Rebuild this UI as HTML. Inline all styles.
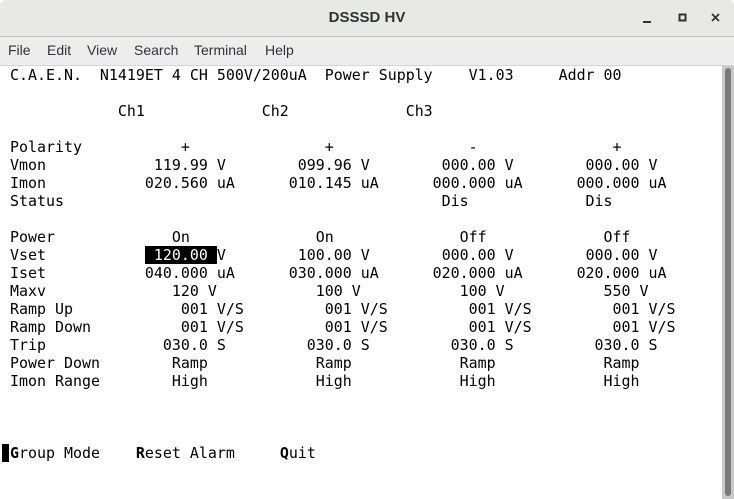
<!DOCTYPE html>
<html><head><meta charset="utf-8"><style>
html,body{margin:0;padding:0;width:734px;height:499px;overflow:hidden;background:#fff;font-family:"Liberation Sans",sans-serif}
#title{position:absolute;left:0;top:0;width:734px;height:36px;background:#e8e8e7;border-bottom:1px solid #c0c0bd;border-radius:6px 6px 0 0}
#title .t{position:absolute;left:0;right:0;top:9px;text-align:center;font-size:15px;font-weight:bold;color:#2e3436}
#menu{position:absolute;left:0;top:37px;width:734px;height:28px;background:#ededed;border-bottom:1px solid #d5d5d5}
#menu span{position:absolute;top:5px;font-size:14px;color:#2e3436}
pre{position:absolute;left:10px;top:66px;margin:0;font-family:"DejaVu Sans Mono","Liberation Mono",monospace;font-size:14.95px;line-height:18px;color:#000}
.hl{background:#000;color:#fff}
#cur{position:absolute;left:2px;top:444px;width:7px;height:18px;background:#000}
#trough{position:absolute;left:722px;top:66px;width:12px;height:433px;background:#c9c9c9}
#thumb{position:absolute;left:725px;top:68px;width:6px;height:428px;background:#7a7a7a;border-radius:3px}
</style></head><body>
<div id="title"><div class="t">DSSSD HV</div>
<svg style="position:absolute;left:640px;top:10px" width="90" height="16">
<rect x="3" y="11" width="8" height="2" fill="#2e3436"/>
<rect x="39.5" y="4.5" width="6" height="6" fill="none" stroke="#2e3436" stroke-width="2"/>
<path d="M72 4 L79 11 M79 4 L72 11" stroke="#2e3436" stroke-width="1.8"/>
</svg></div>
<div id="menu"><span style="left:8px">File</span><span style="left:47px">Edit</span><span style="left:87px">View</span><span style="left:134px">Search</span><span style="left:194px">Terminal</span><span style="left:265px">Help</span></div>
<pre>C.A.E.N.  N1419ET 4 CH 500V/200uA  Power Supply    V1.03     Addr 00

            Ch1             Ch2             Ch3

Polarity           +               +               -               +
Vmon            119.99 V        099.96 V        000.00 V        000.00 V
Imon           020.560 uA      010.145 uA      000.000 uA      000.000 uA
Status                                          Dis             Dis

Power             On              On              Off             Off
Vset           <span class="hl"> 120.00 </span>V        100.00 V        000.00 V        000.00 V
Iset           040.000 uA      030.000 uA      020.000 uA      020.000 uA
Maxv              120 V           100 V           100 V           550 V
Ramp Up            001 V/S         001 V/S         001 V/S         001 V/S
Ramp Down          001 V/S         001 V/S         001 V/S         001 V/S
Trip             030.0 S         030.0 S         030.0 S         030.0 S
Power Down        Ramp            Ramp            Ramp            Ramp
Imon Range        High            High            High            High



<b>G</b>roup Mode    <b>R</b>eset Alarm     <b>Q</b>uit</pre>
<div id="cur"></div>
<div id="trough"></div><div id="thumb"></div>
</body></html>
